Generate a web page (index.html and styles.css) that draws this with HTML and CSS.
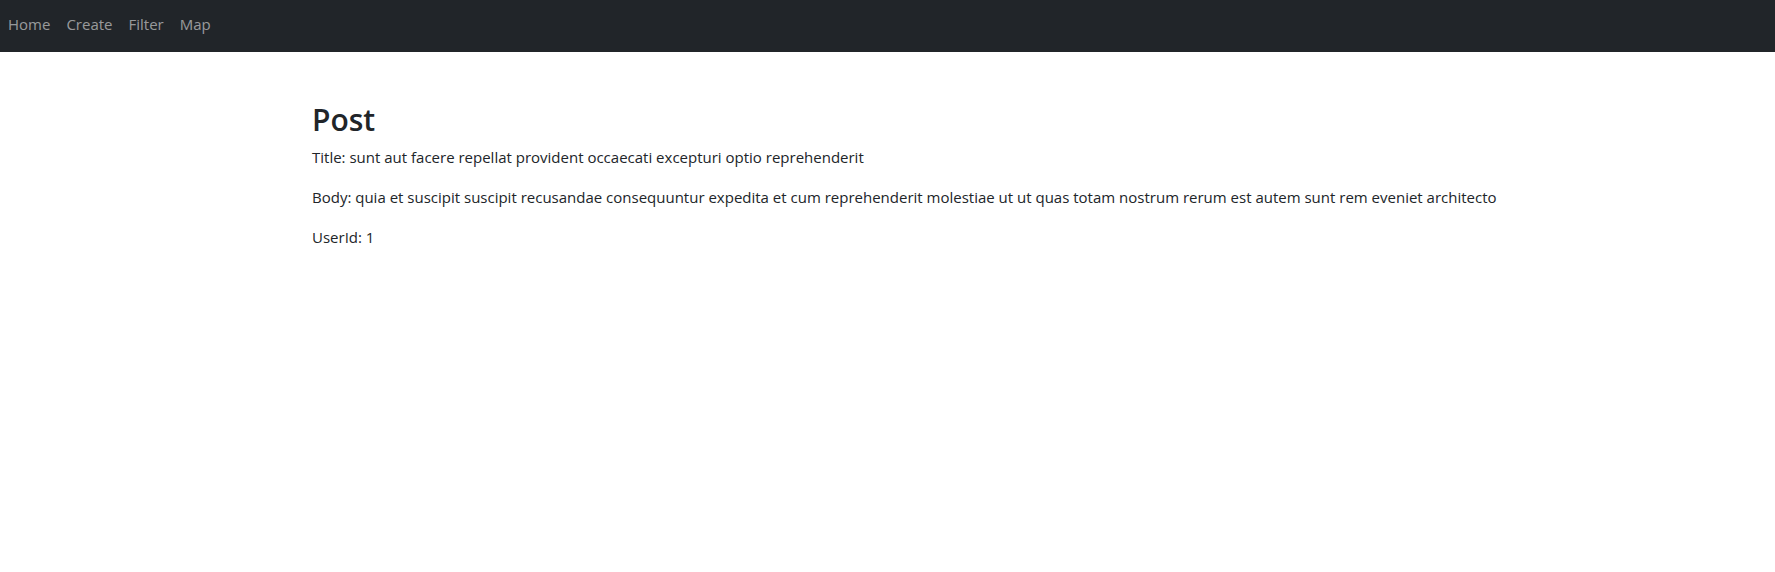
FILE: index.html
```html
<!DOCTYPE html>
<html lang="en">
<head>
<meta charset="utf-8">
<title>Post</title>
<link rel="stylesheet" href="styles.css">
</head>
<body>
<nav class="navbar">
  <ul class="nav">
    <li><a class="nav-link" href="#">Home</a></li>
    <li><a class="nav-link" href="#">Create</a></li>
    <li><a class="nav-link" href="#">Filter</a></li>
    <li><a class="nav-link" href="#">Map</a></li>
  </ul>
</nav>
<main class="container">
  <h1 class="title">Post</h1>
  <p>Title: sunt aut facere repellat provident occaecati excepturi optio reprehenderit</p>
  <p>Body: quia et suscipit suscipit recusandae consequuntur expedita et cum reprehenderit molestiae ut ut quas totam nostrum rerum est autem sunt rem eveniet architecto</p>
  <p>UserId: 1</p>
</main>
</body>
</html>
```
FILE: styles.css
```css
* { box-sizing: border-box; }
body {
  margin: 0;
  font-family: "Open Sans", "Liberation Sans", sans-serif;
  font-size: 15px;
  line-height: 24px;
  color: #212529;
  background: #fff;
}
.navbar {
  background: #212529;
  height: 52px;
  padding-top: 12px;
}
.nav {
  list-style: none;
  margin: 0;
  padding: 0;
  display: flex;
}
.nav-link {
  display: block;
  padding: 0 8px;
  color: rgba(255, 255, 255, 0.55);
  text-decoration: none;
  font-size: 15px;
  line-height: 24px;
}
.container {
  padding: 50px 0 0 312px;
}
.title {
  margin: 0 0 7px;
  font-size: 30px;
  font-weight: 600;
  line-height: 36px;
}
p {
  margin: 0 0 16px;
}
```
